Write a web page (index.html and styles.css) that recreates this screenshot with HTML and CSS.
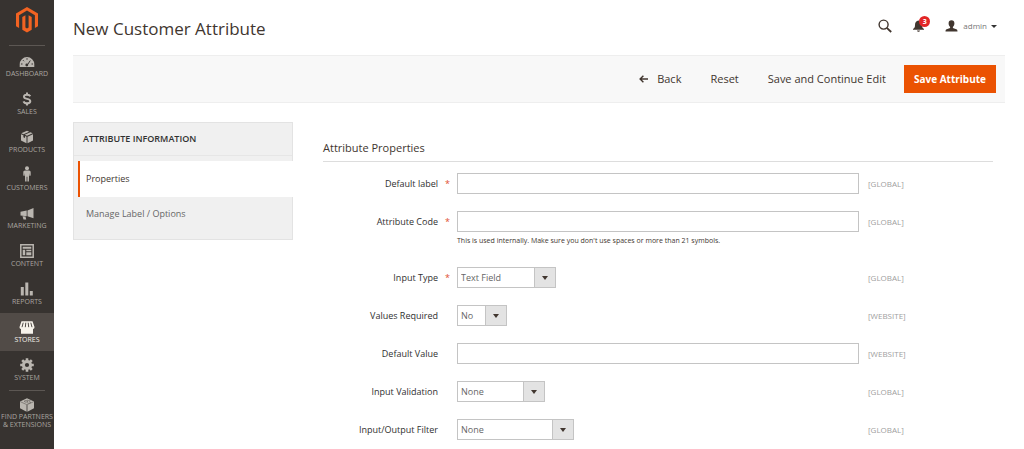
FILE: index.html
```html
<!DOCTYPE html>
<html lang="en">
<head>
<meta charset="utf-8">
<title>New Customer Attribute</title>
<link rel="stylesheet" href="styles.css">
</head>
<body>
<div class="page">
  <nav class="sidebar" aria-label="Main">
    <a class="logo" href="#" aria-label="Home">
      <svg width="22" height="26" viewBox="0 0 22 26"><path fill="#f26322" d="M11 0 0 6.400v12.800l3.100 1.800V8.200L11 3.600l7.900 4.600V21l3.100-1.800V6.400zM12.600 20.600 11 21.600l-1.600-1V8.200L6.300 10v12.800L11 25.600l4.700-2.800V10l-3.100-1.800z"/></svg>
    </a>
    <ul class="menu">
      <li><a class="menu-item" href="#"><svg width="16" height="12" viewBox="0 0 16 12"><path fill="currentColor" d="M8 1a7.300 7.300 0 0 0-7.300 7.300V11h14.600V8.300A7.300 7.300 0 0 0 8 1z"/><path stroke="#373330" fill="none" d="M8 9.500 11.300 4.500M2 8h1.500M12.500 8H14M4 4.200l1 1M8 2.200v1.500"/><circle cx="7.800" cy="9" r="1.400" fill="#373330"/></svg>Dashboard</a></li>
      <li><a class="menu-item" href="#"><svg width="10" height="14" viewBox="0 0 10 14"><path fill="none" stroke="currentColor" stroke-width="2" d="M8.300 4.200C7.700 3.100 6.600 2.700 5 2.700c-1.800 0-3 .7-3 2C2 7.700 8.300 6 8.300 9.200c0 1.400-1.400 2.100-3.300 2.100-1.800 0-3-.6-3.500-1.900M5 .4v2.500M5 11v2.600"/></svg>Sales</a></li>
      <li><a class="menu-item" href="#"><svg width="14" height="14" viewBox="0 0 14 14"><path fill="currentColor" d="M7 .8 1.300 3.300 3.500 4.300 9.200 1.800zM10.400 2.300 4.700 4.800 7 5.800l5.700-2.500zM1 4.200v6.300l5.500 2.800V6.700L5 6v2L3.400 7.200v-2zM13 4.200 7.500 6.700v6.600l5.500-2.800z"/></svg>Products</a></li>
      <li><a class="menu-item" href="#"><svg width="10" height="16" viewBox="0 0 10 16"><circle cx="5" cy="2.200" r="2" fill="currentColor"/><path fill="currentColor" d="M3 4.600h4c1 0 1.700.8 1.700 1.800v3.200L7.500 10l-.4-3-.2 8.500H5.400v-4.700h-.8v4.700H3.100L2.900 7l-.4 3-1.200-.4V6.400c0-1 .7-1.800 1.700-1.800z"/></svg>Customers</a></li>
      <li><a class="menu-item" href="#"><svg width="14" height="12" viewBox="0 0 14 12"><path fill="currentColor" d="M13.500 0v10.200L7.500 8.300V2.500zM.5 3.700l6.200-1.100v5.600L.5 7.500zM2.500 8.200l3 .4.700 2.900H3.500z"/></svg>Marketing</a></li>
      <li><a class="menu-item" href="#"><svg width="14" height="14" viewBox="0 0 14 14"><path fill="none" stroke="currentColor" stroke-width="1.500" d="M.8.800h12.400v12.400H.8z"/><path fill="currentColor" d="M2.700 2.700h8.600v2H2.700zM2.700 5.800h2.500v5.500H2.700zM6.300 5.800h5v1.400h-5zM6.300 8.300h5v3h-5z"/></svg>Content</a></li>
      <li><a class="menu-item" href="#"><svg width="14" height="14" viewBox="0 0 14 14"><path fill="currentColor" d="M.8 5h3v8.500h-3zM5.300.500h3v13h-3zM9.800 9h3v4.500h-3z"/></svg>Reports</a></li>
      <li><a class="menu-item active" href="#"><svg width="16" height="13" viewBox="0 0 16 13"><path fill="currentColor" d="M2.500.300h11l2 5.700c0 1.200-.6 1.900-1.500 2.100v4.600H2V8.100C1.100 7.900.5 7.200.5 6z"/><path fill="none" stroke="#514b47" d="M4.200 1.700 3 6.200M6.800 1.700 6.300 6.200M9.200 1.700l.5 4.500M11.800 1.700 13 6.200"/></svg>Stores</a></li>
      <li><a class="menu-item" href="#"><svg width="14" height="14" viewBox="0 0 14 14"><circle cx="7" cy="7" r="3.600" fill="none" stroke="currentColor" stroke-width="3"/><path stroke="currentColor" stroke-width="2.600" d="M7 .2v2.600M7 11.200v2.600M.2 7h2.600M11.200 7h2.600M2.200 2.200 4 4M10 10l1.800 1.800M2.200 11.800 4 10M10 4l1.800-1.800"/></svg>System</a></li>
      <li class="partners"><a class="menu-item" href="#"><svg width="16" height="14" viewBox="0 0 16 14"><path fill="currentColor" d="M8 .300 1 3.400v6.800l6.600 3.500V6.900l.8-.1v6.900l6.600-3.500V3.400z"/><path fill="none" stroke="#6d6864" stroke-width=".7" d="m1.300 3.700 6.700 3 6.700-3M5 3.300l2 1 2-1-2-.9zM8 2l2 .9 1.600-.7M8 4.600l2 .9 2-1-2-.9"/></svg>Find Partners<br>&amp; Extensions</a></li>
    </ul>
  </nav>

  <div class="wrapper">
    <header class="header">
      <h1 class="title">New Customer Attribute</h1>
      <div class="tools">
        <button class="tool" aria-label="Search"><svg width="14" height="14" viewBox="0 0 14 14"><circle cx="5.600" cy="5.600" r="4.500" fill="none" stroke="currentColor" stroke-width="1.400"/><path stroke="currentColor" stroke-width="1.800" d="m8.800 8.800 4.400 4.200"/></svg></button>
        <button class="tool bell" aria-label="Notifications"><svg width="11" height="12" viewBox="0 0 11 12"><path fill="currentColor" d="M5.500.500c-2.300.3-3.500 2-3.500 4.500 0 2.300-.5 3.100-2 4v.8h11V9c-1.500-.9-2-1.700-2-4C9 2.500 7.800.800 5.500.500zM4 10.400h3c-.2.900-.7 1.300-1.500 1.300S4.200 11.300 4 10.400z"/></svg><span class="badge">3</span></button>
        <button class="tool account"><svg width="13" height="12" viewBox="0 0 13 12"><path fill="currentColor" d="M6.500.300c1.900 0 2.900 1.200 2.900 3.100 0 1.500-.7 2.700-1.500 3.600v1l3.400 1.200c.9.300 1.200.9 1.200 2.400H.5c0-1.500.3-2.100 1.200-2.400L5.100 8V7C4.300 6.100 3.600 4.900 3.600 3.400 3.600 1.500 4.600.300 6.500.300z"/></svg><span class="user">admin</span><span class="caret"></span></button>
      </div>
    </header>

    <div class="actions">
      <button class="action back"><svg width="9" height="8" viewBox="0 0 9 8"><path fill="none" stroke="currentColor" stroke-width="1.400" d="M9 4H1.200M4.400.700 1.100 4l3.300 3.300"/></svg>Back</button>
      <button class="action">Reset</button>
      <button class="action">Save and Continue Edit</button>
      <button class="action primary">Save Attribute</button>
    </div>

    <main class="content">
      <aside class="tabs">
        <h2 class="tabs-title">Attribute Information</h2>
        <a class="tab selected" href="#">Properties</a>
        <a class="tab" href="#">Manage Label / Options</a>
      </aside>

      <form class="form">
        <h2 class="legend">Attribute Properties</h2>
        <div class="field required">
          <label class="label" for="label">Default label</label>
          <div class="control"><input class="text" id="label" type="text"></div>
          <span class="scope">[GLOBAL]</span>
        </div>
        <div class="field required">
          <label class="label" for="code">Attribute Code</label>
          <div class="control"><input class="text" id="code" type="text"><p class="note">This is used internally. Make sure you don't use spaces or more than 21 symbols.</p></div>
          <span class="scope">[GLOBAL]</span>
        </div>
        <div class="field required">
          <label class="label" for="type">Input Type</label>
          <div class="control"><span class="select medium"><select id="type"><option>Text Field</option></select></span></div>
          <span class="scope">[GLOBAL]</span>
        </div>
        <div class="field">
          <label class="label" for="values">Values Required</label>
          <div class="control"><span class="select tiny"><select id="values"><option>No</option></select></span></div>
          <span class="scope">[WEBSITE]</span>
        </div>
        <div class="field">
          <label class="label" for="default">Default Value</label>
          <div class="control"><input class="text" id="default" type="text"></div>
          <span class="scope">[WEBSITE]</span>
        </div>
        <div class="field">
          <label class="label" for="validation">Input Validation</label>
          <div class="control"><span class="select small"><select id="validation"><option>None</option></select></span></div>
          <span class="scope">[GLOBAL]</span>
        </div>
        <div class="field">
          <label class="label" for="filter">Input/Output Filter</label>
          <div class="control"><span class="select large"><select id="filter"><option>None</option></select></span></div>
          <span class="scope">[GLOBAL]</span>
        </div>
      </form>
    </main>
  </div>
</div>
</body>
</html>
```
FILE: styles.css
```css
* { box-sizing: border-box; }
body { margin: 0; background: #fff; color: #41362f; font: 9px/12px "Open Sans", "Noto Sans", sans-serif; }
button, input, select { font: inherit; color: inherit; }
button { border: 0; padding: 0; background: none; }
a { color: inherit; text-decoration: none; }
h1, h2, p, ul { margin: 0; padding: 0; }
svg { display: block; flex: none; }

.page { display: flex; min-height: 100vh; }

.sidebar { flex: none; width: 54px; background: #373330; color: #aaa6a0; }
.logo { display: flex; justify-content: center; margin: 0 9px; padding: 7px 0 12px; border-bottom: 1px solid #5c5753; }
.menu { list-style: none; padding-top: 1px; }
.menu-item { display: flex; flex-direction: column; align-items: center; justify-content: flex-end; gap: 1px; height: 38px; padding-bottom: 7px; font-size: 7px; line-height: 9px; text-transform: uppercase; text-align: center; white-space: nowrap; }
.menu-item svg { color: #bab6b0; }
.menu-item.active, .menu-item.active svg { background: #514b47; color: #f7f3eb; }
.partners { padding-top: 1px; }
.partners::before { content: ""; display: block; margin: 0 9px; border-top: 1px solid #5c5753; }
.partners .menu-item { height: auto; padding-top: 7px; line-height: 8px; }

.wrapper { flex: 1; min-width: 0; padding: 0 19px 10px 19px; }
.header { display: flex; align-items: center; justify-content: space-between; height: 55px; padding: 0 8px 3px 0; }
.title { font-size: 17px; line-height: 24px; font-weight: 400; padding-top: 5px; }
.tools { display: flex; align-items: center; gap: 21px; }
.tool { display: flex; align-items: center; }
.bell { position: relative; }
.badge { position: absolute; left: 6px; top: -4px; width: 11px; height: 11px; border-radius: 50%; background: #e22626; color: #fff; font-size: 7px; line-height: 11px; font-weight: 700; text-align: center; }
.user { margin: 0 4px 0 5px; font-size: 8px; color: #777; }
.caret { border: 3px solid transparent; border-top-color: #333; border-bottom: 0; }

.actions { display: flex; align-items: center; justify-content: flex-end; gap: 29px; padding: 9px; background: #f8f8f8; border: solid #eee; border-width: 1px 0; }
.action { display: flex; align-items: center; font-size: 11px; line-height: 16px; font-weight: 500; }
.back { gap: 9px; }
.primary { margin-left: -11px; padding: 6px 10px; background: #eb5202; color: #fff; font-size: 10px; font-weight: 700; }

.content { display: flex; align-items: flex-start; gap: 30px; padding: 19px 12px 0 0; }
.tabs { flex: none; width: 220px; padding-bottom: 7px; background: #f0f0f0; border: 1px solid #e3e3e3; }
.tabs-title { margin-bottom: 5px; padding: 10px 9px; border-bottom: 1px solid #e6e6e6; font-size: 9px; line-height: 12px; font-weight: 600; }
.tabs-title { text-transform: uppercase; color: #303030; }
.tab { display: block; margin-left: 4px; padding: 11px 8px 12px; color: #666; }
.tab.selected { margin-right: -1px; padding: 12px 6px; border-left: 2px solid #eb5202; background: #fff; color: #41362f; font-weight: 500; }

.form { flex: 1; min-width: 0; padding-top: 18px; }
.legend { padding-bottom: 5px; margin-bottom: 11px; border-bottom: 1px solid #ddd; font-size: 11px; line-height: 16px; font-weight: 500; }
.field { display: grid; grid-template-columns: 20% 60% 1fr; margin-bottom: 17px; }
.label { padding-right: 19px; line-height: 21px; font-weight: 500; color: #303030; text-align: right; }
.required .label { padding-right: 7px; }
.required .label::after { content: "*"; display: inline-block; width: 12px; color: #e04f30; }
.text { display: block; width: 100%; height: 21px; padding: 0 4px; border: 1px solid #c4c4c4; }
.note { padding: 3px 0 4px; font-size: 7px; line-height: 11px; }
.scope { padding-left: 9px; line-height: 21px; font-size: 8px; color: #a0a0a0; }
.select { position: relative; display: block; }
.select select { display: block; width: 100%; height: 21px; padding: 0 3px; border: 1px solid #c4c4c4; border-radius: 0; appearance: none; background: linear-gradient(#c4c4c4, #c4c4c4) right 20px top / 1px 100% no-repeat, linear-gradient(#e3e3e3, #e3e3e3) right / 20px 100% no-repeat, #fff; color: #666; }
.select::after { content: ""; position: absolute; right: 8px; top: 9px; border: 3px solid transparent; border-top: 4px solid #41362f; border-bottom: 0; pointer-events: none; }
.tiny { width: 50px; }
.small { width: 88px; }
.medium { width: 99px; }
.large { width: 117px; }
```
